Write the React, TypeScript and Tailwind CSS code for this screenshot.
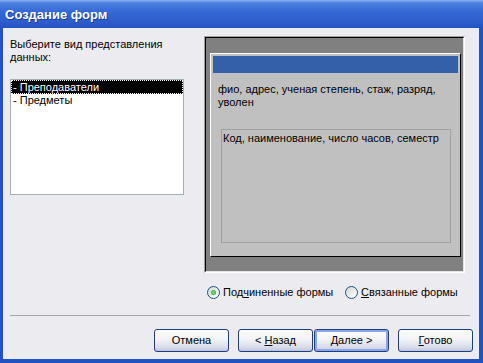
const Radio = ({ checked }: { checked?: boolean }) => (
  <span className="w-[13px] h-[13px] shrink-0 rounded-full border border-[#1c5180] bg-[linear-gradient(135deg,#d6d6ce,#ffffff)] flex items-center justify-center">
    {checked ? <span className="w-[5px] h-[5px] rounded-full bg-[radial-gradient(circle,#7be07b,#21a121)]" /> : null}
  </span>
);

const Btn = ({ children, focused }: { children: React.ReactNode; focused?: boolean }) => (
  <button
    className={
      "w-[75px] h-[23px] rounded-[3px] border border-[#1e3d7a] bg-[linear-gradient(#ffffff,#f3f3f7_45%,#d6dae8_85%,#bcc3da)] text-[11px] text-black flex items-center justify-center " +
      (focused ? "shadow-[inset_0_0_0_2px_#8aa8e8]" : "")
    }
  >
    <span className="whitespace-pre">{children}</span>
  </button>
);

export default function App() {
  return (
    <div className="w-[483px] h-[363px] flex flex-col bg-[#2152c1] font-['Liberation_Sans',Arial,sans-serif] text-[11px] text-black overflow-hidden">
      <div className="h-[28px] shrink-0 flex items-center pl-[5px] pt-[2px] bg-[linear-gradient(#8cb2ef_0px,#4d80e0_3px,#3467d4_12px,#2d5dcc_22px,#2352c1_28px)]">
        <span className="text-white font-bold text-[13px] [text-shadow:1px_1px_0_#1a3c8c]">Создание форм</span>
      </div>

      <div className="flex-1 ml-[3px] mr-[4px] mb-[4px] bg-[#ecebf0] flex flex-col">
        <div className="flex pt-[8px] pl-[7px]">
          {/* left column */}
          <div className="w-[174px] flex flex-col">
            <p className="mt-[2px] leading-[13px]">
              Выберите вид представления
              <br />
              данных:
            </p>
            <div className="mt-[15px] h-[116px] border border-[#a5acb2] bg-white flex flex-col">
              <div className="h-[14px] bg-black text-white border border-dotted border-white leading-[12px] pl-px">
                - Преподаватели
              </div>
              <div className="h-[13px] leading-[13px] pl-[2px]">- Предметы</div>
            </div>
          </div>

          {/* right column */}
          <div className="ml-[20px] flex flex-col">
            <div className="w-[261px] h-[237px] border border-t-[#a0a0a0] border-l-[#a0a0a0] border-r-white border-b-white">
              <div className="h-full border border-t-black border-l-black border-r-[#e4e4e4] border-b-[#e4e4e4] bg-[#808080] pl-[4px] pt-[15px]">
                <div className="w-[251px] h-[204px] border border-t-white border-l-white border-r-black border-b-black bg-[#c0c0c0] p-[2px] flex flex-col">
                  <div className="h-[17px] bg-[#3360a8]" />
                  <p className="mt-[10px] pl-[5px] leading-[13px]">
                    фио, адрес, ученая степень, стаж, разряд,
                    <br />
                    уволен
                  </p>
                  <div className="mt-[20px] ml-[8px] w-[230px] h-[114px] border border-[#a0a0a0] pl-px pt-[2px] leading-[13px]">
                    Код, наименование, число часов, семестр
                  </div>
                </div>
              </div>
            </div>

            <div className="mt-[13px] h-[13px] flex items-center pl-[3px]">
              <label className="w-[138px] flex items-center gap-[3px]">
                <Radio checked />
                <span>
                  Под<span className="underline">ч</span>иненные формы
                </span>
              </label>
              <label className="flex items-center gap-[3px]">
                <Radio />
                <span>
                  <span className="underline">С</span>вязанные формы
                </span>
              </label>
            </div>
          </div>
        </div>

        <div className="mt-[16px] ml-[7px] mr-[9px] h-px bg-[#a6a6ab]" />

        <div className="mt-[13px] flex justify-end pr-[6px]">
          <Btn>Отмена</Btn>
          <div className="ml-[9px] flex gap-px">
            <Btn>
              {"< "}
              <span className="underline">Н</span>
              {"азад"}
            </Btn>
            <Btn focused>
              <span className="underline">Д</span>
              {"алее >"}
            </Btn>
          </div>
          <div className="ml-[9px]">
            <Btn>
              <span className="underline">Г</span>
              {"отово"}
            </Btn>
          </div>
        </div>
      </div>
    </div>
  );
}
